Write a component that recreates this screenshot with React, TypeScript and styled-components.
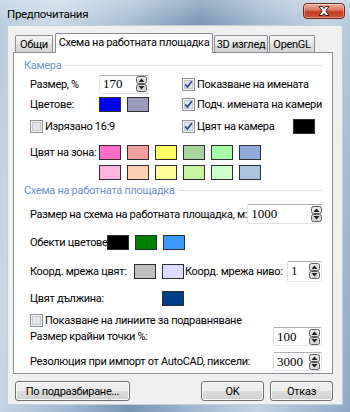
import styled, { createGlobalStyle } from "styled-components";

const uiFont = `Roboto, "Noto Sans", sans-serif`;

const GlobalStyle = createGlobalStyle`
  html, body {
    margin: 0;
    padding: 0;
  }
  body {
    width: 350px;
    height: 412px;
    overflow: hidden;
    font-family: ${uiFont};
    font-size: 11px;
    letter-spacing: -0.3px;
    color: #000;
  }
`;

const Window = styled.div`
  width: 350px;
  height: 412px;
  box-sizing: border-box;
  display: flex;
  flex-direction: column;
  background:
    linear-gradient(180deg, rgba(255, 255, 255, 0.3), rgba(255, 255, 255, 0) 26px),
    linear-gradient(100deg, #b7cadd 0%, #c9d8e7 14%, #a4bbd3 32%, #7694b4 48%, #9fb7cf 62%, #c1d2e3 78%, #8ea8c4 100%);
`;

const TitleBar = styled.div`
  height: 25px;
  display: flex;
  align-items: flex-start;
  justify-content: space-between;
`;

const Title = styled.div`
  padding: 6px 0 0 7px;
  line-height: 16px;
  font-size: 11.5px;
`;

const CloseButton = styled.div`
  margin: 3px 5px 0 0;
  width: 42px;
  height: 16px;
  box-sizing: border-box;
  border: 1px solid #6b2a20;
  border-radius: 4px;
  display: flex;
  align-items: center;
  justify-content: center;
  background: linear-gradient(180deg, #eab3a6 0%, #d8735c 45%, #c23a1f 55%, #d0553a 100%);
  box-shadow: inset 0 0 0 1px rgba(255, 255, 255, 0.35);
`;

const Client = styled.div`
  flex: 1;
  margin: 0 7px 7px;
  background: #f0f0f0;
  border: 1px solid #c3d0dc;
  display: flex;
  flex-direction: column;
  padding: 7px 9px 0 5px;
`;

const TabStrip = styled.div`
  height: 20px;
  display: flex;
  align-items: flex-end;
  margin-bottom: -1px;
  position: relative;
  z-index: 1;
`;

const Tab = styled.div<{ $w: number; $active?: boolean; $ml: number }>`
  width: ${(p) => p.$w}px;
  margin-left: ${(p) => p.$ml}px;
  box-sizing: border-box;
  height: ${(p) => (p.$active ? 20 : 17)}px;
  margin-bottom: ${(p) => (p.$active ? 0 : 1)}px;
  border: 1px solid #898c95;
  border-bottom: none;
  border-radius: 2px 2px 0 0;
  background: ${(p) =>
    p.$active ? "#fff" : "linear-gradient(180deg, #f3f3f3 0%, #ebebeb 50%, #dedede 51%, #d6d6d6 100%)"};
  display: flex;
  align-items: center;
  justify-content: center;
  white-space: nowrap;
  padding-bottom: ${(p) => (p.$active ? 2 : 0)}px;
`;

const Panel = styled.div`
  height: 322px;
  box-sizing: border-box;
  border: 1px solid #898c95;
  background: #fff;
  padding: 4px 10px 0 10px;
  display: flex;
  flex-direction: column;
`;

const GroupHeader = styled.div<{ $mt?: number }>`
  height: 16px;
  margin-top: ${(p) => p.$mt ?? 0}px;
  display: flex;
  align-items: center;
  color: #6f93cb;
  white-space: nowrap;
  &::after {
    content: "";
    flex: 1;
    height: 1px;
    margin-left: 3px;
    background: #d5dfe5;
  }
`;

const CameraGrid = styled.div`
  display: grid;
  grid-template-columns: 152px 140px;
  grid-template-rows: 20px 21px 23px;
  margin-left: 6px;
  margin-top: 1px;
`;

const Row = styled.div<{ $h: number; $mt?: number }>`
  height: ${(p) => p.$h}px;
  margin-top: ${(p) => p.$mt ?? 0}px;
  display: flex;
  align-items: center;
  white-space: nowrap;
  overflow: hidden;
`;

const IndentRow = styled(Row)`
  padding-left: 6px;
`;

const Label = styled.span<{ $w?: number }>`
  flex: none;
  width: ${(p) => (p.$w ? `${p.$w}px` : "auto")};
`;

const CheckLabel = styled.span`
  margin-left: 2px;
  flex: 1;
  overflow: hidden;
`;

const Swatch = styled.div<{ $c: string; $ml?: number }>`
  flex: none;
  width: 22px;
  height: 15px;
  box-sizing: border-box;
  margin-left: ${(p) => p.$ml ?? 0}px;
  border: 1px solid #2e2e2e;
  background: ${(p) => p.$c};
`;

const ZoneBlock = styled.div`
  display: flex;
  align-items: flex-start;
  margin: 7px 0 0 6px;
`;

const ZoneLabel = styled.span`
  width: 69px;
  flex: none;
  line-height: 15px;
  white-space: nowrap;
`;

const ZoneGrid = styled.div`
  display: grid;
  grid-template-columns: repeat(6, 22px);
  grid-auto-rows: 15px;
  column-gap: 6px;
  row-gap: 5px;
`;

const SpinBox = styled.div<{ $w: number; $h: number; $ml?: string }>`
  flex: none;
  width: ${(p) => p.$w}px;
  height: ${(p) => p.$h}px;
  margin-left: ${(p) => p.$ml ?? "0"};
  box-sizing: border-box;
  border: 1px solid #dfe3e9;
  border-top-color: #abadb3;
  border-radius: 2px;
  background: #fff;
  display: flex;
  align-items: center;
  justify-content: space-between;
  padding: 0 1px 0 3px;
  font-family: "Liberation Serif", "Times New Roman", serif;
  font-size: 13px;
  letter-spacing: 0;
`;

const ButtonBar = styled.div`
  display: flex;
  margin-top: 7px;
  height: 20px;
`;

const Button = styled.button<{ $w: number; $ml?: string }>`
  width: ${(p) => p.$w}px;
  height: 20px;
  margin-left: ${(p) => p.$ml ?? "0"};
  padding: 0;
  box-sizing: border-box;
  border: 1px solid #707070;
  border-radius: 3px;
  background: linear-gradient(180deg, #f2f2f2 0%, #ebebeb 50%, #dddddd 51%, #cfcfcf 100%);
  box-shadow: inset 0 0 0 1px #fbfbfb;
  font-family: ${uiFont};
  font-size: 11px;
  letter-spacing: -0.3px;
  color: #000;
`;

const CloseIcon = () => (
  <svg width="14" height="12" viewBox="0 0 14 12">
    <path
      d="M2 1.5 L5.5 1.5 L7 3.6 L8.5 1.5 L12 1.5 L8.8 6 L12 10.5 L8.5 10.5 L7 8.4 L5.5 10.5 L2 10.5 L5.2 6 Z"
      fill="#fff"
      stroke="#4a1a14"
      strokeWidth="1"
      strokeLinejoin="round"
    />
  </svg>
);

const Spinner = () => (
  <svg width="11" height="16" viewBox="0 0 11 16">
    <rect x="0.5" y="0.5" width="10" height="7" rx="2" fill="#e4e4e4" stroke="#5c5c5c" />
    <rect x="0.5" y="8.5" width="10" height="7" rx="2" fill="#d8d8d8" stroke="#5c5c5c" />
    <path d="M2.5 6 L5.5 2.5 L8.5 6 Z" fill="#1e1e1e" />
    <path d="M2.5 10 L5.5 13.5 L8.5 10 Z" fill="#1e1e1e" />
  </svg>
);

const CheckBox = ({ checked }: { checked?: boolean }) => (
  <svg width="13" height="13" viewBox="0 0 13 13" style={{ flex: "none" }}>
    <rect x="0.5" y="0.5" width="12" height="12" fill="#f5f5f5" stroke="#8e8f8f" />
    <rect x="2.5" y="2.5" width="8" height="8" fill="#e2e5ea" stroke="#c4c8ce" />
    {checked && (
      <path d="M3.3 6.4 L5.4 9 L9.8 3.2" fill="none" stroke="#2b4a8e" strokeWidth="1.7" />
    )}
  </svg>
);

const zoneColors = [
  "#ff6ec7",
  "#f4a0a0",
  "#ffff66",
  "#a8d5a0",
  "#a8ffa8",
  "#8faadc",
  "#ffb3de",
  "#ffd1b0",
  "#ffff99",
  "#c8f5a0",
  "#ccffcc",
  "#a8c4e0",
];

const App = () => {
  return (
    <>
      <GlobalStyle />
      <Window>
        <TitleBar>
          <Title>Предпочитания</Title>
          <CloseButton>
            <CloseIcon />
          </CloseButton>
        </TitleBar>
        <Client>
          <TabStrip>
            <Tab $w={38} $ml={2}>Общи</Tab>
            <Tab $w={158} $ml={2} $active>
              Схема на работната площадка
            </Tab>
            <Tab $w={54} $ml={1}>3D изглед</Tab>
            <Tab $w={46} $ml={1}>OpenGL</Tab>
          </TabStrip>
          <Panel>
            <GroupHeader>Камера</GroupHeader>
            <CameraGrid>
              <Row $h={20}>
                <Label $w={69}>Размер, %</Label>
                <SpinBox $w={50} $h={19}>
                  170
                  <Spinner />
                </SpinBox>
              </Row>
              <Row $h={20}>
                <CheckBox checked />
                <CheckLabel>Показване на имената</CheckLabel>
              </Row>
              <Row $h={21}>
                <Label $w={69}>Цветове:</Label>
                <Swatch $c="#0000ff" />
                <Swatch $c="#9b9bc0" $ml={6} />
              </Row>
              <Row $h={21}>
                <CheckBox checked />
                <CheckLabel>Подч. имената на камерит</CheckLabel>
              </Row>
              <Row $h={23}>
                <CheckBox />
                <CheckLabel>Изрязано 16:9</CheckLabel>
              </Row>
              <Row $h={23}>
                <CheckBox checked />
                <CheckLabel>Цвят на камера</CheckLabel>
                <Swatch $c="#000" style={{ marginRight: 7 }} />
              </Row>
            </CameraGrid>
            <ZoneBlock>
              <ZoneLabel>Цвят на зона:</ZoneLabel>
              <ZoneGrid>
                {zoneColors.map((c) => (
                  <Swatch key={c} $c={c} />
                ))}
              </ZoneGrid>
            </ZoneBlock>
            <GroupHeader $mt={2}>Схема на работната площадка</GroupHeader>
            <IndentRow $h={22} $mt={5}>
              <Label>Размер на схема на работната площадка, м:</Label>
              <SpinBox $w={77} $h={20} $ml="auto">
                1000
                <Spinner />
              </SpinBox>
            </IndentRow>
            <IndentRow $h={18} $mt={8}>
              <Label $w={77}>Обекти цветове</Label>
              <Swatch $c="#000000" />
              <Swatch $c="#008000" $ml={6} />
              <Swatch $c="#3d9bff" $ml={6} />
            </IndentRow>
            <IndentRow $h={22} $mt={9}>
              <Label $w={104}>Коорд. мрежа цвят:</Label>
              <Swatch $c="#c0c0c0" />
              <Swatch $c="#dcdcff" $ml={6} />
              <Label style={{ marginLeft: 1 }}>Коорд. мрежа ниво:</Label>
              <SpinBox $w={35} $h={21} $ml="auto">
                1
                <Spinner />
              </SpinBox>
            </IndentRow>
            <IndentRow $h={18} $mt={7}>
              <Label $w={132}>Цвят дължина:</Label>
              <Swatch $c="#003f87" />
            </IndentRow>
            <IndentRow $h={13} $mt={7}>
              <CheckBox />
              <CheckLabel>Показване на линиите за подравняване</CheckLabel>
            </IndentRow>
            <IndentRow $h={19} $mt={0}>
              <Label>Размер крайни точки %:</Label>
              <SpinBox $w={49} $h={19} $ml="auto">
                100
                <Spinner />
              </SpinBox>
            </IndentRow>
            <IndentRow $h={19} $mt={6}>
              <Label>Резолюция при импорт от AutoCAD, пиксели:</Label>
              <SpinBox $w={49} $h={19} $ml="auto">
                3000
                <Spinner />
              </SpinBox>
            </IndentRow>
          </Panel>
          <ButtonBar>
            <Button $w={115} $ml="2px">
              По подразбиране...
            </Button>
            <Button $w={63} $ml="auto">
              OK
            </Button>
            <Button $w={63} $ml="6px">
              Отказ
            </Button>
          </ButtonBar>
        </Client>
      </Window>
    </>
  );
};

export default App;
